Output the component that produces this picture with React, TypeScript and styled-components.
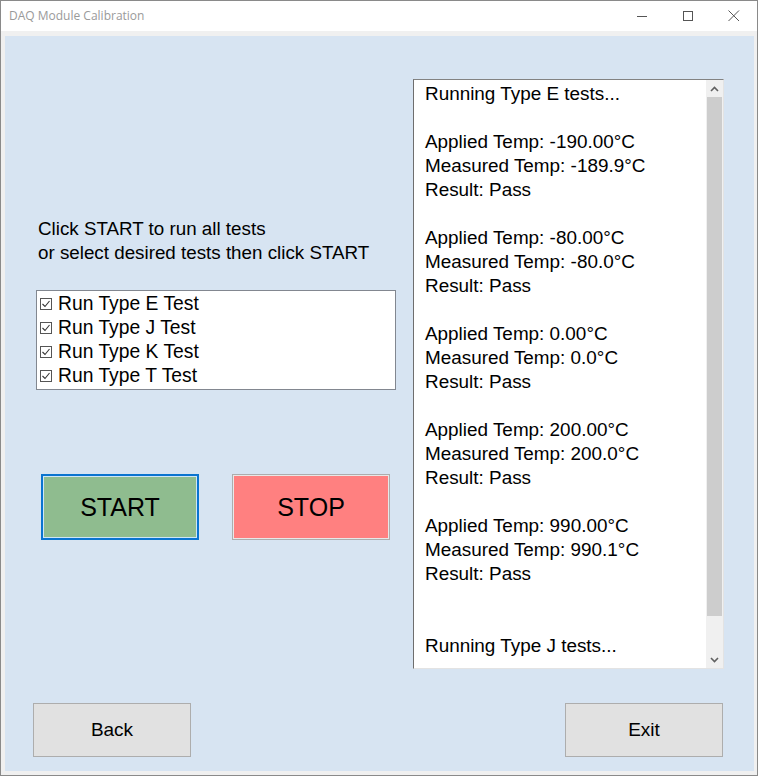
import React from "react";
import styled, { createGlobalStyle } from "styled-components";

const Global = createGlobalStyle`
  html, body { margin: 0; padding: 0; background: #ffffff; }
  * { box-sizing: border-box; }
`;

const Window = styled.div`
  width: 758px;
  height: 776px;
  border: 1px solid #8a8a8a;
  background: #f0f0f0;
  display: flex;
  flex-direction: column;
  font-family: "Liberation Sans", Arial, sans-serif;
  color: #000;
`;

const TitleBar = styled.div`
  height: 30px;
  background: #ffffff;
  display: flex;
  align-items: center;
  flex-shrink: 0;
`;

const Title = styled.div`
  flex: 1;
  padding-left: 8px;
  font-family: "Open Sans", "Noto Sans", sans-serif;
  font-size: 12px;
  color: #9a9a9a;
  padding-bottom: 1px;
`;

const CaptionButton = styled.div`
  width: 46px;
  height: 30px;
  display: flex;
  align-items: center;
  justify-content: center;
`;

const Frame = styled.div`
  flex: 1;
  padding: 5px 4px 4px 4px;
  display: flex;
`;

const Panel = styled.div`
  flex: 1;
  background: #d7e4f2;
  padding: 43px 30px 13px 28px;
  display: flex;
  flex-direction: column;
`;

const MainRow = styled.div`
  display: flex;
  height: 590px;
`;

const LeftColumn = styled.div`
  width: 380px;
  display: flex;
  flex-direction: column;
  padding-top: 138px;
`;

const Instructions = styled.div`
  margin-left: 5px;
  font-size: 18.8px;
  line-height: 24px;
`;

const CheckList = styled.div`
  margin-top: 25px;
  margin-left: 3px;
  width: 360px;
  height: 100px;
  background: #ffffff;
  border: 1px solid #828790;
  padding: 1px 0 0 3px;
`;

const CheckRow = styled.div`
  display: flex;
  align-items: center;
  height: 24px;
  font-size: 19.3px;
  gap: 5px;
`;

const ButtonRow = styled.div`
  display: flex;
  margin-top: 84px;
  margin-left: 8px;
  gap: 33px;
`;

const BigButton = styled.div<{ $fill: string; $focused?: boolean }>`
  width: 158px;
  height: 66px;
  background: ${(p) => p.$fill};
  border: ${(p) => (p.$focused ? "2px solid #0a74d0" : "1px solid #adadad")};
  box-shadow: inset 0 0 0 1px ${(p) => (p.$focused ? "#cde6f7" : "#e8e8e8")};
  display: flex;
  align-items: center;
  justify-content: center;
  font-size: 25px;
  padding-top: 1px;
`;

const LogBox = styled.div`
  width: 311px;
  height: 590px;
  background: #ffffff;
  border-top: 1px solid #828282;
  border-left: 1px solid #6e6e6e;
  border-right: 1px solid #e3e3e3;
  border-bottom: 1px solid #e3e3e3;
  display: flex;
  overflow: hidden;
`;

const LogText = styled.div`
  flex: 1;
  padding: 2px 0 0 11px;
  font-size: 18.9px;
  line-height: 24px;
  white-space: pre;
  overflow: hidden;
`;

const ScrollBar = styled.div`
  width: 17px;
  background: #f0f0f0;
  display: flex;
  flex-direction: column;
`;

const ScrollArrow = styled.div`
  height: 17px;
  display: flex;
  align-items: center;
  justify-content: center;
`;

const ScrollTrack = styled.div`
  flex: 1;
  display: flex;
  flex-direction: column;
  padding: 0 1px;
`;

const ScrollThumb = styled.div`
  height: 519px;
  background: #cdcdcd;
`;

const BottomRow = styled.div`
  margin-top: 34px;
  padding-right: 1px;
  display: flex;
  justify-content: space-between;
`;

const FormButton = styled.div`
  width: 158px;
  height: 54px;
  background: #e1e1e1;
  border: 1px solid #adadad;
  display: flex;
  align-items: center;
  justify-content: center;
  font-size: 19px;
`;

const CheckIcon = () => (
  <svg width="13" height="13" viewBox="0 0 13 13">
    <rect x="0.5" y="0.5" width="11" height="11" fill="#fff" stroke="#555" strokeWidth="1" />
    <path d="M2.5 6 L5 8.5 L9.5 3" fill="none" stroke="#333" strokeWidth="1.1" />
  </svg>
);

const Chevron = ({ up }: { up: boolean }) => (
  <svg width="9" height="6" viewBox="0 0 9 6">
    <path
      d={up ? "M1 5 L4.5 1.5 L8 5" : "M1 1 L4.5 4.5 L8 1"}
      fill="none"
      stroke="#606060"
      strokeWidth="1.6"
    />
  </svg>
);

const tests = ["Run Type E Test", "Run Type J Test", "Run Type K Test", "Run Type T Test"];

const logLines = [
  "Running Type E tests...",
  "",
  "Applied Temp: -190.00°C",
  "Measured Temp: -189.9°C",
  "Result: Pass",
  "",
  "Applied Temp: -80.00°C",
  "Measured Temp: -80.0°C",
  "Result: Pass",
  "",
  "Applied Temp: 0.00°C",
  "Measured Temp: 0.0°C",
  "Result: Pass",
  "",
  "Applied Temp: 200.00°C",
  "Measured Temp: 200.0°C",
  "Result: Pass",
  "",
  "Applied Temp: 990.00°C",
  "Measured Temp: 990.1°C",
  "Result: Pass",
  "",
  "",
  "Running Type J tests...",
];

export default function App() {
  return (
    <>
      <Global />
      <Window>
        <TitleBar>
          <Title>DAQ Module Calibration</Title>
          <CaptionButton>
            <svg width="11" height="11" viewBox="0 0 11 11">
              <path d="M0 5.5 H10" stroke="#555" strokeWidth="1" />
            </svg>
          </CaptionButton>
          <CaptionButton>
            <svg width="11" height="11" viewBox="0 0 11 11">
              <rect x="0.5" y="0.5" width="9" height="9" fill="none" stroke="#555" strokeWidth="1" />
            </svg>
          </CaptionButton>
          <CaptionButton>
            <svg width="12" height="12" viewBox="0 0 12 12">
              <path d="M0.5 0.5 L11 11 M11 0.5 L0.5 11" stroke="#555" strokeWidth="1" />
            </svg>
          </CaptionButton>
        </TitleBar>
        <Frame>
          <Panel>
            <MainRow>
              <LeftColumn>
                <Instructions>
                  Click START to run all tests
                  <br />
                  or select desired tests then click START
                </Instructions>
                <CheckList>
                  {tests.map((t) => (
                    <CheckRow key={t}>
                      <CheckIcon />
                      <span>{t}</span>
                    </CheckRow>
                  ))}
                </CheckList>
                <ButtonRow>
                  <BigButton $fill="#8fbc8f" $focused>
                    START
                  </BigButton>
                  <BigButton $fill="#ff8080">STOP</BigButton>
                </ButtonRow>
              </LeftColumn>
              <LogBox>
                <LogText>{logLines.join("\n")}</LogText>
                <ScrollBar>
                  <ScrollArrow>
                    <Chevron up />
                  </ScrollArrow>
                  <ScrollTrack>
                    <ScrollThumb />
                  </ScrollTrack>
                  <ScrollArrow>
                    <Chevron up={false} />
                  </ScrollArrow>
                </ScrollBar>
              </LogBox>
            </MainRow>
            <BottomRow>
              <FormButton>Back</FormButton>
              <FormButton>Exit</FormButton>
            </BottomRow>
          </Panel>
        </Frame>
      </Window>
    </>
  );
}
